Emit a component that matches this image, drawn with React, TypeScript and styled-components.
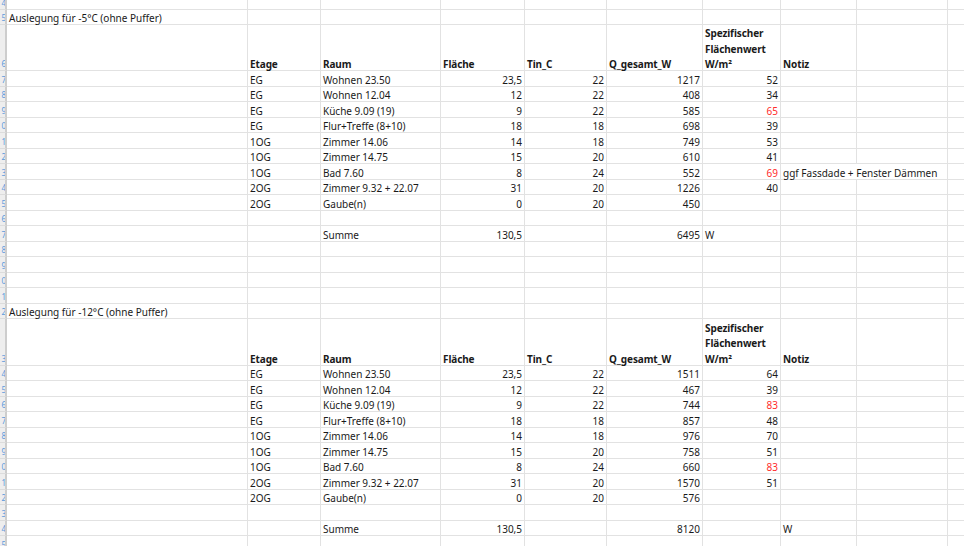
import React from "react";
import styled, { createGlobalStyle, css } from "styled-components";

const GlobalStyle = createGlobalStyle`
  html, body {
    margin: 0;
    padding: 0;
    background: #ffffff;
  }
  body {
    font-family: "Noto Sans", "Open Sans", sans-serif;
    font-size: 10px;
    color: #1e1e1e;
    overflow: hidden;
  }
`;

type Align = "left" | "right";

type CellData = {
  text?: React.ReactNode;
  align?: Align;
  bold?: boolean;
  red?: boolean;
  span?: number;
};

type RowData = {
  height: number;
  num: number;
  cells: CellData[];
};

const COLUMN_COUNT = 10;

const row = (height: number, cells: CellData[] = []): Omit<RowData, "num"> => ({
  height,
  cells,
});

const tableHeader = (): CellData[] => [
  {},
  { text: "Etage", bold: true },
  { text: "Raum", bold: true },
  { text: "Fläche", bold: true },
  { text: "Tin_C", bold: true },
  { text: "Q_gesamt_W", bold: true },
  {
    text: (
      <>
        Spezifischer
        <br />
        Flächenwert
        <br />
        W/m²
      </>
    ),
    bold: true,
  },
  { text: "Notiz", bold: true },
];

type Room = [string, string, string, string, string, string?, boolean?, string?];

const dataRow = ([etage, raum, flaeche, tin, q, spez, red, note]: Room): CellData[] => {
  const cells: CellData[] = [
    {},
    { text: etage },
    { text: raum },
    { text: flaeche, align: "right" },
    { text: tin, align: "right" },
    { text: q, align: "right" },
    { text: spez, align: "right", red },
  ];
  if (note) cells.push({ text: note, span: 2 });
  return cells;
};

const rooms1: Room[] = [
  ["EG", "Wohnen 23.50", "23,5", "22", "1217", "52"],
  ["EG", "Wohnen 12.04", "12", "22", "408", "34"],
  ["EG", "Küche 9.09 (19)", "9", "22", "585", "65", true],
  ["EG", "Flur+Treffe (8+10)", "18", "18", "698", "39"],
  ["1OG", "Zimmer 14.06", "14", "18", "749", "53"],
  ["1OG", "Zimmer 14.75", "15", "20", "610", "41"],
  ["1OG", "Bad 7.60", "8", "24", "552", "69", true, "ggf Fassdade + Fenster Dämmen"],
  ["2OG", "Zimmer 9.32 + 22.07", "31", "20", "1226", "40"],
  ["2OG", "Gaube(n)", "0", "20", "450"],
];

const rooms2: Room[] = [
  ["EG", "Wohnen 23.50", "23,5", "22", "1511", "64"],
  ["EG", "Wohnen 12.04", "12", "22", "467", "39"],
  ["EG", "Küche 9.09 (19)", "9", "22", "744", "83", true],
  ["EG", "Flur+Treffe (8+10)", "18", "18", "857", "48"],
  ["1OG", "Zimmer 14.06", "14", "18", "976", "70"],
  ["1OG", "Zimmer 14.75", "15", "20", "758", "51"],
  ["1OG", "Bad 7.60", "8", "24", "660", "83", true],
  ["2OG", "Zimmer 9.32 + 22.07", "31", "20", "1570", "51"],
  ["2OG", "Gaube(n)", "0", "20", "576"],
];

const ROW_H = 15.5;

const rows: RowData[] = [
  row(9.5),
  row(ROW_H, [{ text: "Auslegung für -5°C (ohne Puffer)" }]),
  row(46, tableHeader()),
  ...rooms1.map((r) => row(ROW_H, dataRow(r))),
  row(ROW_H),
  row(ROW_H, [
    {},
    {},
    { text: "Summe" },
    { text: "130,5", align: "right" },
    {},
    { text: "6495", align: "right" },
    { text: "W" },
  ]),
  row(ROW_H),
  row(ROW_H),
  row(ROW_H),
  row(ROW_H),
  row(ROW_H, [{ text: "Auslegung für -12°C (ohne Puffer)" }]),
  row(46.5, tableHeader()),
  ...rooms2.map((r) => row(ROW_H, dataRow(r))),
  row(ROW_H),
  row(ROW_H, [
    {},
    {},
    { text: "Summe" },
    { text: "130,5", align: "right" },
    {},
    { text: "8120", align: "right" },
    {},
    { text: "W" },
  ]),
  row(ROW_H),
].map((r, i) => ({ ...r, num: 4 + i }));

const App: React.FC = () => {
  return (
    <>
      <GlobalStyle />
      <Sheet>
        {rows.map((r) => {
          const cells: CellData[] = [...r.cells];
          let used = cells.reduce((n, c) => n + (c.span ?? 1), 0);
          while (used < COLUMN_COUNT) {
            cells.push({});
            used += 1;
          }
          return (
            <Row key={r.num} $height={r.height}>
              <RowHeader>
                <RowNumber>{r.num % 10}</RowNumber>
              </RowHeader>
              {cells.map((c, i) => (
                <Cell
                  key={i}
                  $align={c.align ?? "left"}
                  $red={!!c.red}
                  $span={c.span ?? 1}
                  $last={i === cells.length - 1}
                >
                  {c.text !== undefined && <CellText $bold={!!c.bold}>{c.text}</CellText>}
                </Cell>
              ))}
            </Row>
          );
        })}
      </Sheet>
    </>
  );
};

export default App;

const Sheet = styled.div`
  width: 964px;
  height: 546px;
  overflow: hidden;
  background: #ffffff;
`;

interface RowProps {
  $height: number;
}

const Row = styled.div<RowProps>`
  display: grid;
  grid-template-columns: 7px 241px 73px 120px 84px 82px 96px 78px 76px 91px 1fr;
  height: ${({ $height }) => $height}px;
`;

const RowHeader = styled.div`
  box-sizing: border-box;
  background: #eeeeee;
  border-right: 2px solid #cdcdcd;
  border-bottom: 1px solid #dcdcdc;
  overflow: hidden;
  display: flex;
  align-items: flex-end;
  justify-content: flex-start;
`;

const RowNumber = styled.span`
  font-size: 8px;
  line-height: 12px;
  color: #5b9bdc;
  margin-left: 1.5px;
`;

interface CellProps {
  $align: Align;
  $red: boolean;
  $span: number;
  $last: boolean;
}

const Cell = styled.div<CellProps>`
  box-sizing: border-box;
  border-bottom: 1px solid #e2e2e2;
  border-right: 1px solid #e2e2e2;
  padding: 0 2px;
  display: flex;
  align-items: flex-end;
  justify-content: ${({ $align }) => ($align === "right" ? "flex-end" : "flex-start")};
  white-space: nowrap;
  min-width: 0;
  color: ${({ $red }) => ($red ? "#ff2b2b" : "#1a1a1a")};
  grid-column: span ${({ $span }) => $span};
  ${({ $last }) =>
    $last &&
    css`
      border-right: none;
    `}
`;

const CellText = styled.span<{ $bold: boolean }>`
  line-height: 15.5px;
  margin-bottom: -2.7px;
  font-weight: ${({ $bold }) => ($bold ? 700 : 400)};
  ${({ $bold }) =>
    $bold &&
    css`
      letter-spacing: -0.1px;
    `}
`;
